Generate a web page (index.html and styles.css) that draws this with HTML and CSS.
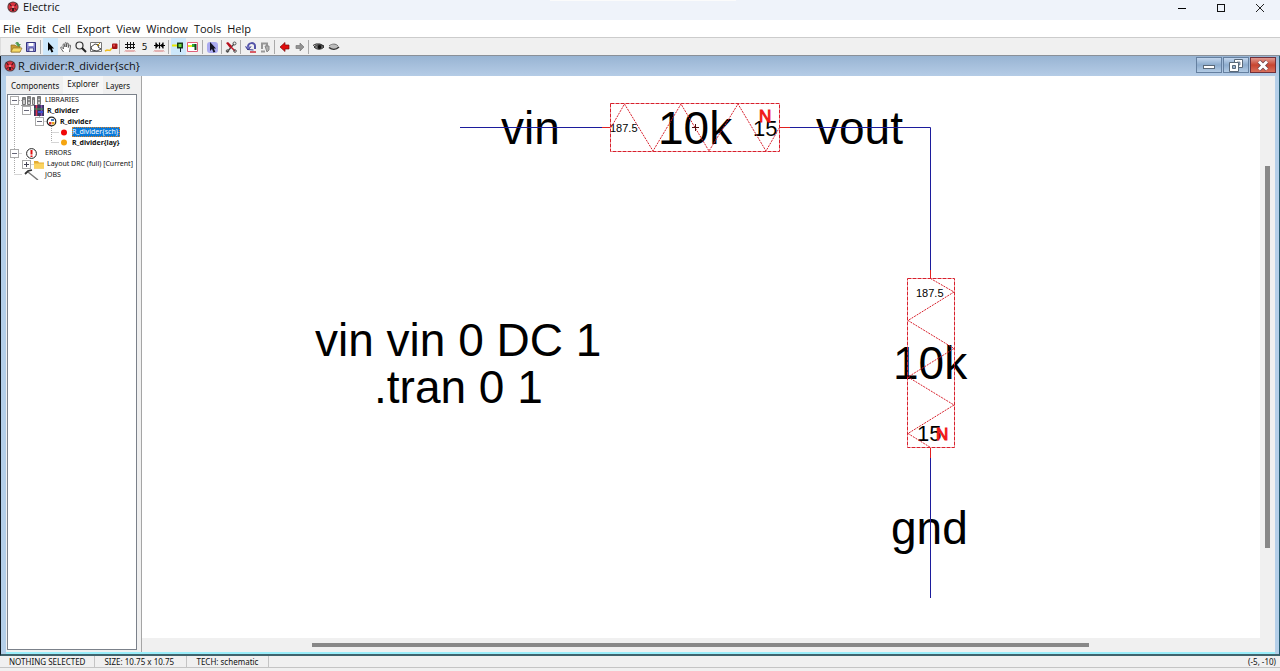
FILE: index.html
```html
<!DOCTYPE html>
<html lang="en">
<head>
<meta charset="utf-8">
<title>Electric</title>
<link rel="stylesheet" href="styles.css">
</head>
<body>
<svg class="defs" width="0" height="0" aria-hidden="true">
  <defs>
    <symbol id="logo" viewBox="0 0 12 12">
      <circle cx="6" cy="6" r="5.6" fill="#5a4040"/>
      <circle cx="6" cy="6" r="4.6" fill="#d8303c"/>
      <path d="M3 3.200l2 1.600-1.600.4zM9 3.200L7 4.800l1.600.4zM5 7h2v3H5z" fill="#401820"/>
      <path d="M1.800 2.500l2 1M10.200 2.500l-2 1M2.500 9l2-2M9.500 9l-2-2" stroke="#302020" stroke-width=".9"/>
      <circle cx="6" cy="6" r="1" fill="#f0a0a0"/>
    </symbol>
    <symbol id="grid" viewBox="0 0 14 14">
      <path d="M2 4.500h10M2 7.500h10M4.500 2v7M7.500 2v7M10.500 2v7" stroke="#111"/>
      <path d="M2 11.500l1-1 1 1 1-1 1 1 1-1 1 1 1-1 1 1 1-1 1 1" stroke="#c44" fill="none" stroke-width=".8"/>
    </symbol>
  </defs>
</svg>
<div class="app">
  <header class="titlebar">
    <svg class="logo" width="12" height="12"><use href="#logo"/></svg>
    <h1 class="title">Electric</h1>
    <div class="window-buttons">
      <button aria-label="Minimize"><svg width="10" height="10"><path d="M1 6.500h8" stroke="#000"/></svg></button>
      <button aria-label="Maximize"><svg width="10" height="10"><rect x="1.500" y="2.500" width="7" height="7" fill="none" stroke="#111"/></svg></button>
      <button aria-label="Close"><svg width="10" height="10"><path d="M1 2l8 8M9 2l-8 8" stroke="#222"/></svg></button>
    </div>
  </header>
  <nav class="menubar">
    <button>File</button><button>Edit</button><button>Cell</button><button>Export</button><button>View</button><button>Window</button><button>Tools</button><button>Help</button>
  </nav>
  <div class="toolbar" role="toolbar">
    <button aria-label="Open"><svg width="14" height="14"><path d="M1 5h4l1 1h4v6H1z" fill="#c99b32" stroke="#8a6a20" stroke-width=".7"/><path d="M3 8h9l-2 4H1z" fill="#f7dc6a" stroke="#94762a" stroke-width=".7"/><path d="M5 3.500C7 1 9 2 9 4h2L8.500 7 6 4h1.500" fill="#4e9a50"/></svg></button>
    <button aria-label="Save"><svg width="14" height="14"><path d="M1.500 2.500h9v9h-9z" fill="#8a8ad0" stroke="#343480"/><path d="M3.500 3h5v3h-5z" fill="#fff"/><path d="M4 8h4.500v3.500H4z" fill="#e8e8f8" stroke="#343480" stroke-width=".7"/></svg></button>
    <span class="sep"></span>
    <button class="on" aria-label="Select"><svg width="14" height="14"><path d="M4 2v9l2-2 1.500 3.500 1.800-.8L7.800 8.500H10z" fill="#000"/></svg></button>
    <button aria-label="Pan"><svg width="14" height="14"><path d="M4.500 12L2 8.500c-1-1.500.6-2 1.500-.6L4.500 9 4 5c0-1.300 1.300-1.300 1.400 0L6 7V3.500C6 2.200 7.500 2.200 7.500 3.500V7l.4-3c.1-1.300 1.500-1.200 1.500.1L9.300 7.500l.7-2c.5-1 1.800-.6 1.500.5L10.500 12" fill="#fff" stroke="#555" stroke-width=".9"/></svg></button>
    <button aria-label="Zoom"><svg width="14" height="14"><circle cx="5.500" cy="5.500" r="3.500" fill="#f4f4f4" stroke="#333" stroke-width="1.200"/><path d="M8 8l4 4" stroke="#222" stroke-width="2"/></svg></button>
    <button aria-label="Outline"><svg width="14" height="14"><path d="M1.500 2.500h11v9h-11z" fill="#fff" stroke="#777"/><path d="M2 7l4-3 4 1-1 2 3 2-4 2-5-1z" fill="#fff" stroke="#333" stroke-width=".9"/><path d="M8 6l3-3" stroke="#c90"/></svg></button>
    <button aria-label="Measure"><svg width="14" height="14"><path d="M1 11l2-1 3 .5L8 8" fill="none" stroke="#efbd20" stroke-width="1.500"/><rect x="8" y="3.500" width="5.500" height="5.500" rx="1" fill="#a51414"/><rect x="9" y="4.500" width="2" height="2" fill="#e04848"/></svg></button>
    <span class="sep"></span>
    <button aria-label="Toggle grid"><svg width="14" height="14"><use href="#grid"/></svg></button>
    <button class="step" aria-label="Grid step 5">5</button>
    <button aria-label="Arrange grid"><svg width="14" height="14"><path d="M1 5.500h11M3 2.500v6M6.500 2.500v6M10 2.500v6" stroke="#000" stroke-width="1.200"/><path d="M3 3l3 2.500L3 8zM10 3L7 5.500 10 8z" fill="#000"/><path d="M1 11.500l1-1 1 1 1-1 1 1 1-1 1 1 1-1 1 1 1-1 1 1" stroke="#c44" fill="none" stroke-width=".8"/></svg></button>
    <span class="sep"></span>
    <button class="on" aria-label="Select objects"><svg width="14" height="14"><path d="M0 5.500h6" stroke="#e9e900" stroke-width="2"/><path d="M5 2.500h6v6H5z" fill="#183c18"/><path d="M6.500 4h3v3h-3z" fill="#68d838"/><path d="M8.500 8v4" stroke="#123"/></svg></button>
    <button aria-label="Select area"><svg width="14" height="14"><path d="M.5 2.500h10v9H.5z" fill="#fff" stroke="#e0607a"/><path d="M1 6h4" stroke="#e6ec20" stroke-width="2"/><path d="M5 4h4v3H5z" fill="#2fae38"/><path d="M7.500 4h2v6h-2z" fill="#164020"/></svg></button>
    <span class="sep"></span>
    <button aria-label="Special select"><svg width="14" height="14"><rect x="1" y="2" width="11" height="11" rx="3" fill="#aaaaf0"/><path d="M4 2v9l2-2 1.500 3.500 1.800-.8L7.800 8.500H10z" fill="#112"/></svg></button>
    <span class="sep"></span>
    <button aria-label="Preferences"><svg width="14" height="14"><path d="M2 12l7-8" stroke="#444" stroke-width="1.200"/><path d="M1 3l2-1 4 4-2 2z" fill="#b7101c"/><path d="M5 6l5 5" stroke="#c01828" stroke-width="1.500"/><circle cx="9.500" cy="3.500" r="1.500" fill="none" stroke="#555"/><circle cx="2.500" cy="11" r="1.300" fill="none" stroke="#555"/><circle cx="10" cy="11" r="1.300" fill="none" stroke="#555"/></svg></button>
    <span class="sep"></span>
    <button aria-label="Undo"><svg width="14" height="14"><path d="M4 7c0-5 7-5 7-1v3" fill="none" stroke="#5454a8" stroke-width="2"/><path d="M1.500 6.500L4 10l3-3.500M3.500 9.500l6 .5" fill="#7676c8" stroke="#383888"/><path d="M6 12h6" stroke="#d02c38" stroke-width="1.500"/></svg></button>
    <button aria-label="Redo"><svg width="14" height="14"><path d="M3 9V3.500h5V7" fill="none" stroke="#969696" stroke-width="2"/><path d="M6 6h4v4l-2 2z" fill="#b0b0b0" stroke="#888"/><path d="M2 11.500h4" stroke="#999" stroke-width="2"/></svg></button>
    <span class="sep"></span>
    <button aria-label="Back"><svg width="14" height="14"><path d="M2 7L7 2.500V5h4v4H7v2.500z" fill="#e00c0c" stroke="#771010" stroke-width=".7"/></svg></button>
    <button aria-label="Forward"><svg width="14" height="14"><path d="M11 7L7 3v2.500H3v3h4V11z" fill="#929292" stroke="#777" stroke-width=".7"/></svg></button>
    <span class="sep"></span>
    <button aria-label="Show"><svg width="14" height="14"><path d="M2 7C5 4 9 4 12 7c-3 3-7 3-10 0z" fill="#777" stroke="#222" stroke-width=".9"/><path d="M1 5.500l3-1.500h4l4 2" fill="none" stroke="#222"/><circle cx="7.500" cy="7" r="2" fill="#111"/></svg></button>
    <button aria-label="Hide"><svg width="14" height="14"><path d="M2 7c3-3 7-3 10 0-3 3-7 3-10 0z" fill="#bbb"/><path d="M2 7.500c3 2.500 7 2.500 10-.5" fill="none" stroke="#333" stroke-width="1.500"/><path d="M2 6c3-2.500 7-2.500 9 0" fill="none" stroke="#666"/></svg></button>
  </div>

  <section class="frame">
    <div class="frame-title">
      <svg class="logo" width="12" height="12"><use href="#logo"/></svg>
      <h2 class="title">R_divider:R_divider{sch}</h2>
      <div class="frame-buttons">
        <button aria-label="Minimize cell"><svg width="24" height="13"><rect x="6.500" y="6.500" width="11" height="3" fill="#fff" stroke="#596878"/></svg></button>
        <button aria-label="Restore cell"><svg width="24" height="13"><path d="M10.500 .5h8v8h-8z" fill="#fff" stroke="#596878"/><path d="M13 3h3v3h-3z" fill="#9bb4d0" stroke="#596878" stroke-width=".7"/><path d="M5.500 3.500h9v9h-9z" fill="#fff" stroke="#596878"/><path d="M8.500 6.500h3v3h-3z" fill="#9bb4d0" stroke="#596878"/></svg></button>
        <button class="close" aria-label="Close cell"><svg width="24" height="13"><path d="M8 2.500l8 8M16 2.500l-8 8" stroke="#66404a" stroke-width="4.500"/><path d="M8 2.500l8 8M16 2.500l-8 8" stroke="#fff" stroke-width="3"/></svg></button>
      </div>
    </div>
    <div class="frame-body">
      <aside class="side">
        <div class="tabs" role="tablist">
          <button role="tab">Components</button>
          <button role="tab" class="active" aria-selected="true">Explorer</button>
          <button role="tab">Layers</button>
        </div>
        <div class="tree-box">
          <svg class="tree-lines" width="70" height="86" aria-hidden="true"><path d="M6.500 9v70M6.500 58.500h8M6.500 79.500h8M11 5.500h5M18.500 10v6M18.500 15.500h6M31.500 21v5M31.500 26.500h7M43.500 31v16M43.500 37.500h8M43.500 47.500h8M18.500 63v6M18.500 69.500h8" fill="none" stroke="#aaa" stroke-dasharray="1 1"/></svg>
          <ul class="tree" role="tree">
            <li class="l0" role="treeitem"><button class="exp" aria-label="Collapse libraries"></button><svg width="22" height="11"><path d="M1.500 2.500h3v7h-3zM6.500 1.500h3v8h-3zM11.500 2.500h2v7h-2zM16.500 1.500h3v8h-3z" fill="#ccc" stroke="#777"/><path d="M2 4h2M7 3h2M12 4h1M17 3h2M7 6h2M17 6h2" stroke="#444"/><path d="M0 10.500h21" stroke="#999"/></svg><span>LIBRARIES</span></li>
            <li class="l1 bold" role="treeitem"><button class="exp" aria-label="Collapse library"></button><svg width="12" height="11"><rect x="1" width="10" height="11" fill="#36365e"/><path d="M3.500 0v11" stroke="#e03050" stroke-width="1.500"/><path d="M8.500 0v11" stroke="#8a50b0" stroke-width="1.500"/><path d="M1 4h9" stroke="#3ca050"/><path d="M5 7h5" stroke="#4050d0" stroke-width="2"/></svg><span>R_divider</span></li>
            <li class="l2 bold" role="treeitem"><button class="exp" aria-label="Collapse cell"></button><svg width="12" height="11"><circle cx="5.500" cy="5.500" r="4.300" fill="#fff" stroke="#222" stroke-width="1.200"/><path d="M3 6h2.500v2.500H3z" fill="#d83030"/><path d="M6 6h2.500v2.500H6z" fill="#e6a820"/><path d="M5 3h3v2H5z" fill="#4478b8"/></svg><span>R_divider</span></li>
            <li class="l3" role="treeitem" aria-selected="true"><svg width="12" height="11"><circle cx="6" cy="5.500" r="3" fill="#f00808"/></svg><span class="selected">R_divider{sch}</span></li>
            <li class="l3 bold" role="treeitem"><svg width="12" height="11"><circle cx="6" cy="5.500" r="3" fill="#f5a511"/></svg><span>R_divider{lay}</span></li>
            <li class="l0" role="treeitem"><button class="exp" aria-label="Collapse errors"></button><svg width="22" height="11"><circle cx="10.500" cy="5.500" r="4.900" fill="#fff" stroke="#222"/><path d="M10.500 2v4.500M10.500 7.500v1.500" stroke="#e01010" stroke-width="2"/></svg><span>ERRORS</span></li>
            <li class="l1" role="treeitem"><button class="exp plus" aria-label="Expand layout DRC"></button><svg width="12" height="11"><path d="M1 2h4l1 1.500h5v6H1z" fill="#e5ad35"/><path d="M1 4.500h10v5H1z" fill="#fbd35f"/></svg><span>Layout DRC (full) [Current]</span></li>
            <li class="l0" role="treeitem"><i class="exp-gap"></i><svg width="22" height="11"><path d="M7 3l5 4 5 4" fill="none" stroke="#777" stroke-width="1.500"/><path d="M4 5l3-3 4-1" fill="none" stroke="#333" stroke-width="1.800"/></svg><span>JOBS</span></li>
          </ul>
        </div>
      </aside>
      <main class="editor">
        <div class="canvas">
          <svg class="schematic" width="1118" height="562" viewBox="142 76 1118 562" preserveAspectRatio="xMinYMin meet">
            <g class="label">
              <text x="501" y="144">vin</text>
              <text x="658" y="144">10k</text>
              <text x="816" y="144">vout</text>
              <text x="315" y="356">vin vin 0 DC 1</text>
              <text x="374" y="403">.tran 0 1</text>
              <text x="893" y="379">10k</text>
              <text x="891" y="544">gnd</text>
            </g>
            <g class="label-mid"><text x="753" y="136">15</text><text x="917" y="441">15</text></g>
            <g class="label-small"><text x="610" y="132">187.5</text><text x="916" y="297">187.5</text></g>
            <g class="wire"><path d="M460 127.500h142M790 127.500h140.500V270M930.500 458v140"/></g>
            <g class="pin"><path d="M602 127.500h8M780 127.500h10M930.500 270v8M930.500 448v10"/></g>
            <g class="bounds"><rect x="610.500" y="103.500" width="169" height="48"/><rect x="907.500" y="278.500" width="47" height="169"/></g>
            <g class="zigzag">
              <path d="M611 127.500L624.500 104 653 151 681 104 709 151 738 104 766 151 779.500 127.500"/>
              <path d="M930.500 278.500L954 292 908 320.500 954 348.500 908 377 954 405 908 433.500 930.500 447.500"/>
            </g>
            <path class="cross" d="M692 127.500h7M695.500 124v7"/>
            <g class="type"><text x="759" y="122">N</text><text x="936" y="440">N</text></g>
          </svg>
          <div class="vbar"><div class="thumb"></div></div>
          <div class="hbar"><div class="thumb"></div></div>
        </div>
      </main>
    </div>
  </section>
  <footer class="status">
    <span>NOTHING SELECTED</span><span class="size">SIZE: 10.75 x 10.75</span><span class="tech">TECH: schematic</span>
    <output>(-5, -10)</output>
  </footer>
</div>
</body>
</html>
```
FILE: styles.css
```css
* { box-sizing: border-box; }
body { margin: 0; font-family: "Noto Sans", "Open Sans", sans-serif; color: #111; background: #f0f0f0; }
button { margin: 0; padding: 0; border: 0; background: none; font: inherit; color: inherit; }
svg { display: block; flex: none; }
.defs { position: absolute; }
.app { display: flex; flex-direction: column; height: 100vh; overflow: hidden; }

.titlebar { display: flex; align-items: center; height: 20px; flex: none; padding: 0 1px 6px 7px; background: #eff3fa; position: relative; }
.titlebar::before { content: ""; position: absolute; top: 0; left: 43%; width: 186px; height: 1px; background: #fbfbfb; }
.title { margin: 0 0 0 4px; font-family: "Open Sans", sans-serif; font-size: 11px; line-height: 14px; font-weight: 400; }
.window-buttons { display: flex; margin-left: auto; }
.window-buttons button { width: 39px; height: 14px; display: grid; place-items: center; }

.menubar { display: flex; gap: 6px; flex: none; height: 18px; padding: 1px 0 0 3px; background: #fff; border-bottom: 1px solid #ccc; font-family: "Open Sans", sans-serif; font-size: 11px; line-height: 16px; }

.toolbar { display: flex; align-items: center; flex: none; height: 18px; padding-left: 8px; border-left: 1px solid #ddd; border-bottom: 1px solid #8a9098; background: #f0f0f0; }
.toolbar button { width: 15px; height: 17px; display: grid; place-items: center; flex: none; }
.toolbar .on { background: #cde8fb; }
.toolbar .step { font-family: "DejaVu Sans", sans-serif; font-size: 9px; }
.sep { width: 1px; height: 14px; margin: 0 2px 0 1px; background: #aaa; flex: none; }

.frame { flex: 1; min-height: 0; display: flex; flex-direction: column; border-left: 1px solid #101820; border-right: 1px solid #245a70; border-bottom: 2px solid #40636c; background: #b4cfe9; }
.frame-title { display: flex; align-items: center; flex: none; height: 20px; padding: 0 2px 0 3px; background: linear-gradient(#98b4d3, #b5cce6); }
.frame-title .title { margin-left: 2px; }
.frame-buttons { display: flex; gap: 1px; margin: 0 1px 2px auto; }
.frame-buttons button { width: 26px; height: 16px; display: grid; place-items: center; border: 1px solid #6580a0; background: linear-gradient(#c2d6ee, #8daccd 50%, #b3cbe5); }
.frame-buttons .close { border-color: #70303a; background: linear-gradient(#e19a90, #c84530 50%, #d8705c); }
.frame-body { flex: 1; min-height: 0; display: flex; margin: 0 4px 0 5px; border-bottom: 2px solid #9aeefa; background: #f0f0f0; }

.side { flex: none; width: 136px; padding: 0 4px 2px 1px; border-right: 1px solid #a5a5a5; display: flex; flex-direction: column; }
.tabs { display: flex; height: 18px; padding-left: 1px; font-size: 8px; }
.tabs button { padding: 2px 4px 0 3px; height: 18px; line-height: 14px; }
.tabs .active { padding: 0 4px 2px; background: #f7f7f7; }
.tree-box { flex: 1; border: 1px solid #7b818a; background: #fff; position: relative; overflow: hidden; }
.tree-lines { position: absolute; left: 0; top: 0; }
.tree { position: relative; list-style: none; margin: 0; padding: 0; display: grid; grid-template-rows: repeat(8, 1fr); height: 85px; font-size: 7px; line-height: 10px; white-space: nowrap; }
.tree li { display: flex; align-items: center; gap: 2px; min-height: 0; }
.l0 { padding-left: 2px; }
.l1 { padding-left: 14px; }
.l2 { padding-left: 27px; }
.tree .l3 { padding-left: 50px; }
.bold { font-weight: 700; }
.exp, .exp-gap { width: 9px; height: 9px; flex: none; }
.tree .exp { border: 1px solid #aaa; background: linear-gradient(#667, #667) center / 5px 1px no-repeat #fff; }
.tree .plus { background: linear-gradient(#445, #445) center / 5px 1px no-repeat, linear-gradient(#445, #445) center / 1px 5px no-repeat #fff; }
.selected { padding-right: 2px; background: #0878d8; color: #fff; outline: 1px dotted #d88028; outline-offset: -1px; }

.editor { flex: 1; min-width: 0; display: flex; }
.canvas { flex: 1; min-width: 0; display: grid; grid-template-columns: 1fr 15px; grid-template-rows: 1fr 14px; }
.schematic { min-width: 0; width: 100%; height: 100%; background: #fff; }
.vbar { padding: 90px 5px 0; }
.vbar .thumb { width: 5px; height: 81%; background: #888; }
.hbar { padding: 5px 0 0 170px; }
.hbar .thumb { width: 82%; height: 4px; background: #888; }

.label, .label-mid, .label-small, .type { font-family: "Liberation Sans", Arial, sans-serif; fill: #000; }
.label { font-size: 46px; }
.label-mid { font-size: 22px; }
.label-small { font-size: 11px; }
.type { font-size: 17px; fill: #f01818; stroke: #f01818; }
.wire, .pin, .bounds, .zigzag { fill: none; stroke-width: 1; }
.wire { stroke: #1c1c9c; }
.pin { stroke: #e02020; }
.bounds { stroke: #d8202c; stroke-dasharray: 4 1; }
.zigzag { stroke: #d8202c; stroke-dasharray: 2 1; }
.cross { stroke: #501010; }

.status { display: flex; flex: none; height: 15px; background: #f0f0f0; font-size: 8px; line-height: 11px; color: #111; }
.status span { height: 12px; padding: 0 9px; border-right: 1px solid #c4c4c4; border-bottom: 1px solid #c4c4c4; }
.status .size { min-width: 92px; }
.status .tech { min-width: 82px; }
.status output { flex: 1; height: 12px; padding-right: 4px; text-align: right; border-bottom: 1px solid #c4c4c4; }
```
